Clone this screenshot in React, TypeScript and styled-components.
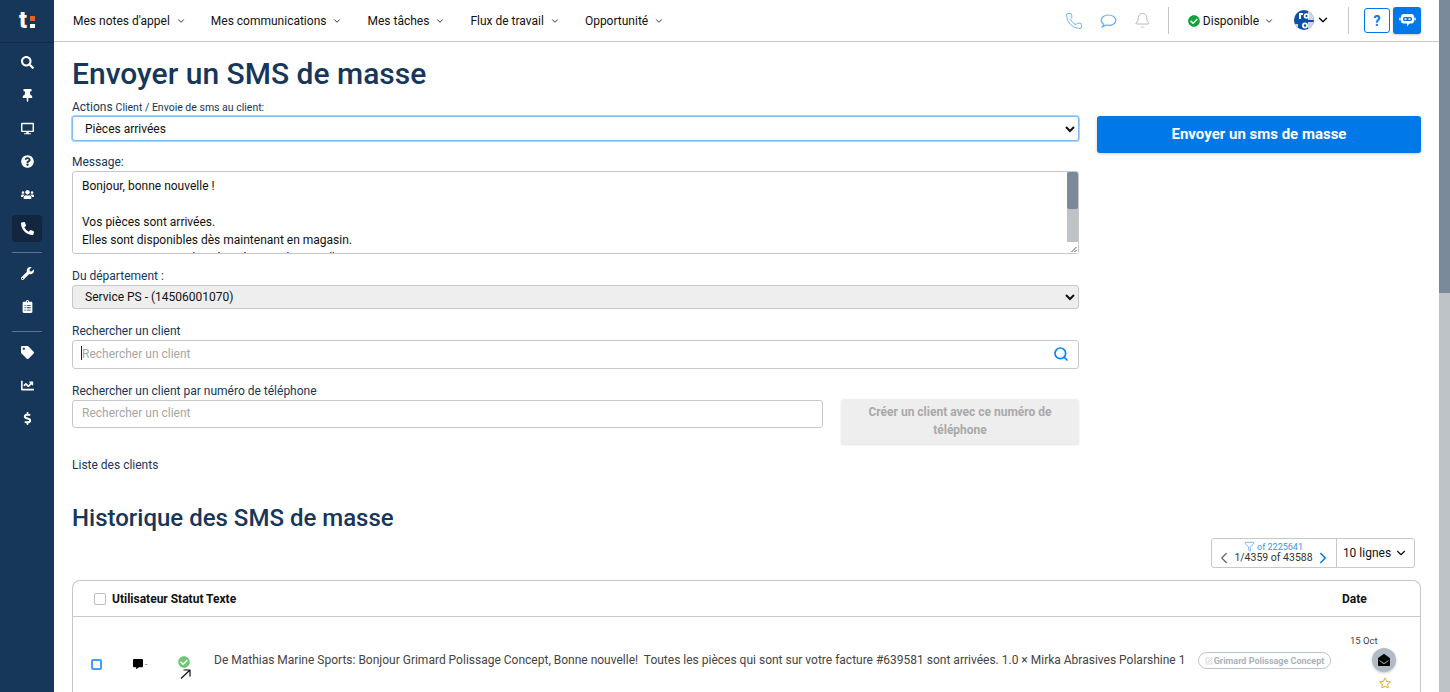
import React from "react";
import styled, { createGlobalStyle } from "styled-components";
import {
  FaSearch,
  FaThumbtack,
  FaDesktop,
  FaQuestionCircle,
  FaUsers,
  FaPhoneAlt,
  FaWrench,
  FaClipboardList,
  FaTag,
  FaChartLine,
  FaDollarSign,
  FaCheckCircle,
  FaEnvelopeOpen,
  FaRegStar,
  FaCommentAlt,
} from "react-icons/fa";
import {
  Phone,
  Bell,
  ChevronDown,
  ChevronLeft,
  ChevronRight,
  Search,
  Funnel,
  SquarePen,
} from "lucide-react";

const navy = "#16365a";
const blue = "#0078e8";

const GlobalStyle = createGlobalStyle`
  body {
    margin: 0;
    font-family: Roboto, "Liberation Sans", sans-serif;
    font-size: 13px;
    color: #000;
    background: #fff;
  }
`;

const Shell = styled.div`
  display: flex;
  height: 100vh;
  overflow: hidden;
`;

const Sidebar = styled.aside`
  width: 54px;
  flex: none;
  background: ${navy};
  color: #fff;
  display: flex;
  flex-direction: column;
  align-items: center;
`;

const Logo = styled.div`
  width: 100%;
  height: 41px;
  border-bottom: 1px solid #102a47;
  display: flex;
  align-items: center;
  justify-content: center;
  margin-bottom: 3px;
  font-size: 23px;
  font-weight: 900;
  line-height: 1;
  padding-bottom: 1px;
  span {
    display: inline-flex;
    flex-direction: column;
    gap: 3px;
    margin-left: 3px;
    margin-top: 3px;
  }
  i {
    display: block;
    width: 5px;
    height: 4.5px;
  }
  i:first-child {
    background: #e0622a;
  }
  i:last-child {
    background: #fff;
  }
`;

const SideItem = styled.div<{ $active?: boolean }>`
  width: 30px;
  height: 27px;
  margin: ${(p) => (p.$active ? 4 : 3)}px 0 3px;
  border-radius: 4px;
  background: ${(p) => (p.$active ? "#12263f" : "transparent")};
  display: flex;
  align-items: center;
  justify-content: center;
  font-size: 13px;
`;

const SideRule = styled.div<{ $top: number }>`
  width: 30px;
  height: 1px;
  background: #5d7590;
  margin: ${(p) => p.$top}px 0 4px;
`;

const Main = styled.div`
  flex: 1;
  min-width: 0;
`;

const PageScroll = styled.div`
  width: 11px;
  flex: none;
  background: #bdc3c7;
  div {
    height: 293px;
    background: #7a8a9b;
  }
`;

const Topbar = styled.header`
  height: 41px;
  border-bottom: 1px solid #c8c8c8;
  display: flex;
  align-items: center;
  padding: 0 18px 0 19px;
`;

const NavItem = styled.div`
  display: flex;
  align-items: center;
  gap: 6px;
  margin-right: 25px;
  font-size: 12px;
  white-space: nowrap;
  color: #111;
`;

const Right = styled.div`
  margin-left: auto;
  display: flex;
  align-items: center;
`;

const TopIcon = styled.div<{ $color: string }>`
  color: ${(p) => p.$color};
  display: flex;
  margin-left: 17px;
`;

const Divider = styled.div<{ $left: number; $right: number }>`
  width: 1px;
  height: 27px;
  background: #c8c8c8;
  margin: 0 ${(p) => p.$right}px 0 ${(p) => p.$left}px;
`;

const Status = styled.div`
  display: flex;
  align-items: center;
  font-size: 12px;
  gap: 3px;
  color: #111;
  svg:first-child {
    color: #0ea33a;
  }
  svg:last-child {
    margin-left: 2px;
  }
`;

const Avatar = styled.div`
  display: flex;
  align-items: center;
  gap: 2px;
  margin: -2px 0 0 20px;
`;

const HelpButton = styled.div`
  width: 26px;
  height: 25px;
  box-sizing: border-box;
  border: 1px solid ${blue};
  border-radius: 3px;
  color: ${blue};
  font-weight: 700;
  font-size: 14px;
  display: flex;
  align-items: center;
  justify-content: center;
`;

const BotButton = styled.div`
  width: 28px;
  height: 27px;
  margin-left: 3px;
  background: ${blue};
  border-radius: 3px;
  box-shadow: 0 1px 2px rgba(0, 0, 0, 0.2);
  display: flex;
  align-items: center;
  justify-content: center;
`;

const Content = styled.main`
  padding: 0 18px;
`;

const Title = styled.h1`
  margin: 0;
  padding-top: 11px;
  height: 58px;
  box-sizing: border-box;
  font-size: 30px;
  line-height: 42px;
  font-weight: 500;
  color: ${navy};
  white-space: nowrap;
`;

const FormGrid = styled.div`
  display: grid;
  grid-template-columns: 1007px 324px;
  column-gap: 18px;
  align-items: start;
`;

const Field = styled.div<{ $bottom: number }>`
  margin-bottom: ${(p) => p.$bottom}px;
`;

const Label = styled.label`
  display: block;
  color: ${navy};
  font-size: 12px;
  line-height: 15px;
  margin-bottom: 1px;
  small {
    font-size: 10.5px;
  }
`;

const SelectWrap = styled.div`
  position: relative;
  svg {
    position: absolute;
    right: 3px;
    top: 50%;
    transform: translateY(-50%);
    pointer-events: none;
  }
`;

const Select = styled.select<{ $focus?: boolean; $grey?: boolean; $h: number }>`
  appearance: none;
  width: 100%;
  display: block;
  height: ${(p) => p.$h}px;
  box-sizing: border-box;
  padding: 0 12px;
  border: 1px solid ${(p) => (p.$focus ? "#7cbcf5" : "#c8c8c8")};
  box-shadow: ${(p) => (p.$focus ? "0 0 0 1px #a9d4fa" : "none")};
  border-radius: 3px;
  background: ${(p) => (p.$grey ? "#eeeeee" : "#fff")};
  font-family: inherit;
  font-size: 12px;
  color: #111;
`;

const AreaWrap = styled.div`
  position: relative;
`;

const Area = styled.textarea`
  display: block;
  width: 100%;
  height: 83px;
  box-sizing: border-box;
  padding: 5px 9px 0;
  border: 1px solid #c8c8c8;
  border-radius: 3px;
  font-family: inherit;
  font-size: 12px;
  line-height: 18px;
  color: #111;
  outline: none;
  resize: none;
  overflow: hidden;
`;

const AreaBar = styled.div`
  position: absolute;
  top: 1px;
  right: 1px;
  bottom: 1px;
  width: 11px;
  display: flex;
  flex-direction: column;
  background: #bdc3c7;
  border-radius: 0 2px 2px 0;
`;

const AreaThumb = styled.div`
  height: 37px;
  background: #7a8a9b;
  border-radius: 2px;
`;

const AreaGrip = styled.div`
  margin-top: auto;
  height: 11px;
  background: #fff;
  display: flex;
`;

const InputWrap = styled.div`
  position: relative;
  flex: 1;
  color: #0a84ff;
  > svg {
    position: absolute;
    right: 10px;
    top: 6px;
  }
`;

const Input = styled.input<{ $h: number }>`
  display: block;
  width: 100%;
  height: ${(p) => p.$h}px;
  box-sizing: border-box;
  padding: 0 9px 2px;
  border: 1px solid #c8c8c8;
  border-radius: 3px;
  font-family: inherit;
  font-size: 12px;
  outline: none;
  &::placeholder {
    color: #a6a6a6;
    opacity: 1;
  }
`;

const Caret = styled.div`
  position: absolute;
  left: 9px;
  top: 6px;
  width: 1px;
  height: 14px;
  background: #222;
`;

const PhoneRow = styled.div`
  display: flex;
  align-items: flex-start;
  gap: 18px;
`;

const CreateButton = styled.button`
  width: 238px;
  height: 45px;
  flex: none;
  margin-top: -1px;
  border: 0;
  border-radius: 3px;
  background: #eeeeee;
  box-shadow: 0 1px 2px rgba(0, 0, 0, 0.12);
  color: #a9a9a9;
  font-family: inherit;
  font-size: 12px;
  font-weight: 700;
  line-height: 18px;
  padding: 0 20px 2px;
`;

const SendButton = styled.button`
  width: 324px;
  height: 37px;
  margin-top: 16px;
  padding-bottom: 3px;
  border: 0;
  border-radius: 3px;
  background: ${blue};
  box-shadow: 0 1px 3px rgba(0, 0, 0, 0.2);
  color: #fff;
  font-family: inherit;
  font-size: 15px;
  font-weight: 700;
`;

const ListLink = styled.div`
  color: ${navy};
  font-size: 12px;
  line-height: 15px;
  margin-top: 14px;
`;

const SubTitle = styled.h2`
  margin: 28px 0 0;
  font-size: 24px;
  line-height: 34px;
  font-weight: 500;
  color: ${navy};
`;

const PagerRow = styled.div`
  display: flex;
  justify-content: flex-end;
  padding-right: 6px;
  margin-top: 3px;
`;

const Pager = styled.div`
  width: 204px;
  height: 30px;
  box-sizing: border-box;
  border: 1px solid #c8c8c8;
  border-radius: 3px;
  display: flex;
`;

const PageInfo = styled.div`
  width: 125px;
  box-sizing: border-box;
  border-right: 1px solid #c8c8c8;
  padding-right: 1px;
  text-align: center;
  font-size: 10.5px;
  color: #333;
`;

const Filtered = styled.div`
  display: flex;
  align-items: center;
  justify-content: center;
  gap: 2px;
  font-size: 9px;
  height: 11px;
  margin-top: 2px;
  color: #3c93e8;
`;

const PageLine = styled.div`
  display: flex;
  align-items: center;
  justify-content: center;
  gap: 1px;
  height: 11px;
`;

const PageSize = styled.div`
  flex: 1;
  display: flex;
  align-items: center;
  justify-content: center;
  gap: 3px;
  font-size: 12px;
  color: #111;
`;

const Table = styled.div`
  margin-top: 12px;
  border: 1px solid #c8c8c8;
  border-radius: 8px 8px 0 0;
  border-bottom: 0;
`;

const Head = styled.div`
  height: 35px;
  border-bottom: 1px solid #c8c8c8;
  display: flex;
  align-items: center;
  padding-left: 21px;
  font-size: 12px;
  font-weight: 700;
  color: #111;
`;

const Box = styled.div<{ $blue?: boolean }>`
  box-sizing: border-box;
  width: ${(p) => (p.$blue ? 11 : 12)}px;
  height: ${(p) => (p.$blue ? 11 : 12)}px;
  flex: none;
  margin-top: ${(p) => (p.$blue ? 18 : 0)}px;
  border: ${(p) => (p.$blue ? "2px solid #4a9cf2" : "1px solid #bdbdbd")};
  border-radius: 2px;
`;

const HeadLabels = styled.div`
  margin-left: 6px;
  flex: 1;
`;

const DateHead = styled.div`
  width: 78px;
`;

const Row = styled.div`
  height: 110px;
  display: flex;
  align-items: flex-start;
  padding-top: 24px;
  padding-left: 18px;
`;

const UserCell = styled.div`
  width: 76px;
  margin-top: 18px;
  padding-left: 31px;
  box-sizing: border-box;
  display: flex;
  align-items: center;
  gap: 2px;
  font-size: 8px;
  color: #333;
`;

const StatusCell = styled.div`
  width: 36px;
  margin-top: 15px;
  display: flex;
  flex-direction: column;
  svg:first-child {
    color: #6cc873;
  }
  svg:last-child {
    margin: 1px 0 0 2px;
  }
`;

const Message = styled.div`
  width: 971px;
  margin-top: 11px;
  overflow: hidden;
  white-space: nowrap;
  font-size: 12px;
  line-height: 16px;
  color: #444;
`;

const ClientPill = styled.div`
  margin-left: 13px;
  margin-top: 11px;
  height: 17px;
  width: 133px;
  box-sizing: border-box;
  flex: none;
  border: 1px solid #b9c3cc;
  border-radius: 9px;
  display: flex;
  align-items: center;
  justify-content: center;
  gap: 1px;
  color: #aab3bc;
  font-size: 9px;
  font-weight: 700;
  white-space: nowrap;
`;

const DateCell = styled.div`
  margin-left: 19px;
  margin-top: -6px;
  font-size: 9.5px;
  color: #444;
`;

const RoundIcon = styled.div`
  width: 24px;
  height: 24px;
  margin: 2px 0 0 22px;
  border-radius: 50%;
  background: #b0bbc6;
  box-shadow: 0 1px 3px rgba(0, 0, 0, 0.2);
  color: #000;
  display: flex;
  align-items: center;
  justify-content: center;
`;

const Star = styled.div`
  margin: 5px 0 0 29px;
  color: #e8b23c;
  display: flex;
`;

const sideTop = [FaSearch, FaThumbtack, FaDesktop, FaQuestionCircle, FaUsers];
const sideMid = [FaWrench, FaClipboardList];
const sideEnd = [FaTag, FaChartLine, FaDollarSign];
const navLabels = ["Mes notes d'appel", "Mes communications", "Mes tâches", "Flux de travail", "Opportunité"];

const smsText = `Bonjour, bonne nouvelle !

Vos pièces sont arrivées.
Elles sont disponibles dès maintenant en magasin.
Vous pouvez passer les récupérer aux heures d'ouverture.

Merci de votre confiance,
L'équipe Mathias Marine Sports`;

function Chevron() {
  return (
    <svg width="12" height="12" viewBox="0 0 12 12">
      <path d="M2 4l4 4 4-4" fill="none" stroke="#111" strokeWidth="2" />
    </svg>
  );
}

function ChatBubble() {
  return (
    <svg width="17" height="14" viewBox="0 0 17 14">
      <path
        d="M8.500 1C12.600 1 15.800 3.300 15.800 6.200S12.600 11.400 8.500 11.400c-1 0-2-.15-2.900-.4C4.700 11.900 3.500 12.600 2.300 12.800c.7-.8 1.100-1.800 1.100-2.900C2 8.900 1.200 7.600 1.200 6.200 1.200 3.300 4.400 1 8.500 1z"
        fill="none"
        stroke="currentColor"
        strokeWidth="1.200"
      />
    </svg>
  );
}

function AvatarPic() {
  return (
    <svg width="20" height="20" viewBox="0 0 20 20">
      <clipPath id="avatar-clip">
        <circle cx="10" cy="10" r="10" />
      </clipPath>
      <g clipPath="url(#avatar-clip)">
        <rect width="20" height="20" fill="#0c4fa8" />
        <path d="M14 0h6v20h-6zM0 14h4v6H0z" fill="#dfe4ea" opacity="0.9" />
        <path d="M5 3h2v6H5zM7 3h2v2H7z" fill="#fff" />
        <circle cx="12.500" cy="6" r="2.800" fill="#fff" />
        <circle cx="12.500" cy="6" r="1.100" fill="#0c4fa8" />
        <circle cx="11" cy="15.500" r="3" fill="#fff" />
        <circle cx="11" cy="15.500" r="1.200" fill="#0c4fa8" />
        <rect y="10" width="20" height="2" fill="#0c4fa8" />
      </g>
    </svg>
  );
}

function BotIcon() {
  return (
    <svg width="17" height="15" viewBox="0 0 17 15">
      <rect x="0" y="4.500" width="2" height="3" rx="0.800" fill="#cfe4fb" />
      <rect x="15" y="4.500" width="2" height="3" rx="0.800" fill="#cfe4fb" />
      <path d="M4.500 1h8a2.500 2.500 0 0 1 2.500 2.500v4.500a2.500 2.500 0 0 1-2.500 2.500h-2L8 13.500v-3H4.500A2.500 2.500 0 0 1 2 8V3.500A2.500 2.500 0 0 1 4.500 1z" fill="#fff" />
      <rect x="4" y="4" width="9" height="4" rx="1.500" fill={blue} />
      <rect x="5.500" y="5.200" width="2" height="1.600" fill="#fff" />
      <rect x="9.500" y="5.200" width="2" height="1.600" fill="#fff" />
    </svg>
  );
}

function Grip() {
  return (
    <svg width="11" height="11" viewBox="0 0 11 11">
      <path d="M4.500 10l5-5M7.500 10l2-2" stroke="#555" strokeWidth="1" />
    </svg>
  );
}

function SentArrow() {
  return (
    <svg width="11" height="10" viewBox="0 0 11 10">
      <path d="M1 9.500L9.500 1.500M3.500 1h6.500v6.500" fill="none" stroke="#111" strokeWidth="1.200" />
    </svg>
  );
}

export default function App() {
  return (
    <>
      <GlobalStyle />
      <Shell>
        <Sidebar>
          <Logo>
            t
            <span>
              <i />
              <i />
            </span>
          </Logo>
          {sideTop.map((Icon, i) => (
            <SideItem key={i}>
              <Icon />
            </SideItem>
          ))}
          <SideItem $active>
            <FaPhoneAlt />
          </SideItem>
          <SideRule $top={7} />
          {sideMid.map((Icon, i) => (
            <SideItem key={i}>
              <Icon />
            </SideItem>
          ))}
          <SideRule $top={8} />
          {sideEnd.map((Icon, i) => (
            <SideItem key={i}>
              <Icon />
            </SideItem>
          ))}
        </Sidebar>
        <Main>
          <Topbar>
            {navLabels.map((label) => (
              <NavItem key={label}>
                {label}
                <ChevronDown size={10} />
              </NavItem>
            ))}
            <Right>
              <TopIcon $color="#64aef0">
                <Phone size={18} strokeWidth={1.2} />
              </TopIcon>
              <TopIcon $color="#64aef0">
                <ChatBubble />
              </TopIcon>
              <TopIcon $color="#adadad">
                <Bell size={17} strokeWidth={1.2} />
              </TopIcon>
              <Divider $left={17} $right={19} />
              <Status>
                <FaCheckCircle size={12} />
                Disponible
                <ChevronDown size={10} />
              </Status>
              <Avatar>
                <AvatarPic />
                <ChevronDown size={14} strokeWidth={2.2} />
              </Avatar>
              <Divider $left={18} $right={15} />
              <HelpButton>?</HelpButton>
              <BotButton>
                <BotIcon />
              </BotButton>
            </Right>
          </Topbar>
          <Content>
            <Title>Envoyer un SMS de masse</Title>
            <FormGrid>
              <div>
                <Field $bottom={14}>
                  <Label>
                    Actions <small>Client / Envoie de sms au client:</small>
                  </Label>
                  <SelectWrap>
                    <Select $focus $h={25} defaultValue="a">
                      <option value="a">Pièces arrivées</option>
                    </Select>
                    <Chevron />
                  </SelectWrap>
                </Field>
                <Field $bottom={15}>
                  <Label>Message:</Label>
                  <AreaWrap>
                    <Area defaultValue={smsText} />
                    <AreaBar>
                      <AreaThumb />
                      <AreaGrip>
                        <Grip />
                      </AreaGrip>
                    </AreaBar>
                  </AreaWrap>
                </Field>
                <Field $bottom={15}>
                  <Label>Du département :</Label>
                  <SelectWrap>
                    <Select $grey $h={24} defaultValue="a">
                      <option value="a">Service PS - (14506001070)</option>
                    </Select>
                    <Chevron />
                  </SelectWrap>
                </Field>
                <Field $bottom={15}>
                  <Label>Rechercher un client</Label>
                  <InputWrap>
                    <Input $h={29} placeholder="Rechercher un client" />
                    <Caret />
                    <Search size={16} strokeWidth={2.6} />
                  </InputWrap>
                </Field>
                <Label>Rechercher un client par numéro de téléphone</Label>
                <PhoneRow>
                  <InputWrap>
                    <Input $h={28} placeholder="Rechercher un client" />
                  </InputWrap>
                  <CreateButton disabled>Créer un client avec ce numéro de téléphone</CreateButton>
                </PhoneRow>
                <ListLink>Liste des clients</ListLink>
              </div>
              <SendButton>Envoyer un sms de masse</SendButton>
            </FormGrid>
            <SubTitle>Historique des SMS de masse</SubTitle>
            <PagerRow>
              <Pager>
                <PageInfo>
                  <Filtered>
                    <Funnel size={11} strokeWidth={1.4} />
                    of 2225641
                  </Filtered>
                  <PageLine>
                    <ChevronLeft size={18} color="#666" strokeWidth={1.6} />
                    1/4359 of 43588
                    <ChevronRight size={18} color={blue} strokeWidth={2} />
                  </PageLine>
                </PageInfo>
                <PageSize>
                  10 lignes
                  <ChevronDown size={14} />
                </PageSize>
              </Pager>
            </PagerRow>
            <Table>
              <Head>
                <Box />
                <HeadLabels>Utilisateur Statut Texte</HeadLabels>
                <DateHead>Date</DateHead>
              </Head>
              <Row>
                <Box $blue />
                <UserCell>
                  <FaCommentAlt size={10} color="#000" />-
                </UserCell>
                <StatusCell>
                  <FaCheckCircle size={12} />
                  <SentArrow />
                </StatusCell>
                <Message>
                  De Mathias Marine Sports: Bonjour Grimard Polissage Concept, Bonne nouvelle!&nbsp; Toutes les pièces qui sont sur votre facture #639581 sont arrivées. 1.0 × Mirka Abrasives Polarshine 1
                </Message>
                <ClientPill>
                  <SquarePen size={8} strokeWidth={1.5} />
                  Grimard Polissage Concept
                </ClientPill>
                <DateCell>
                  15 Oct
                  <RoundIcon>
                    <FaEnvelopeOpen size={12} />
                  </RoundIcon>
                  <Star>
                    <FaRegStar size={12} />
                  </Star>
                </DateCell>
              </Row>
            </Table>
          </Content>
        </Main>
        <PageScroll>
          <div />
        </PageScroll>
      </Shell>
    </>
  );
}
